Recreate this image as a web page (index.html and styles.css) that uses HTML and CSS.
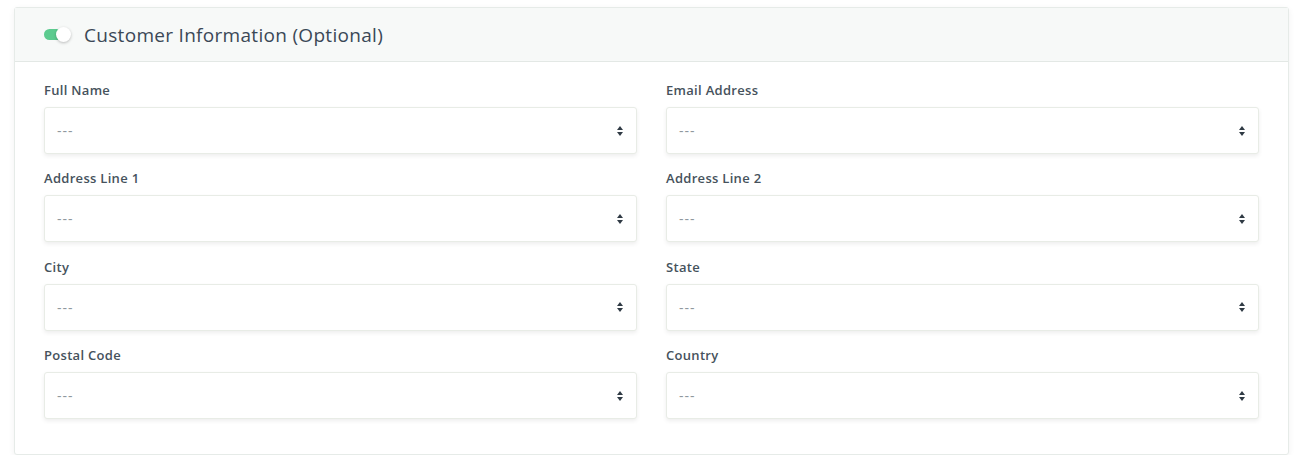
FILE: index.html
```html
<!DOCTYPE html>
<html lang="en">
<head>
    <meta charset="UTF-8">
    <title>Customer Information</title>
    <link rel="stylesheet" href="styles.css">
</head>
<body>
<div class="card">
    <div class="card-header">
        <span class="toggle"><span class="knob"></span></span>
        <h2 class="card-title">Customer Information (Optional)</h2>
    </div>
    <div class="card-body">
        <div class="field">
            <label>Full Name</label>
            <div class="select"><span>---</span><span class="arrows"></span></div>
        </div>
        <div class="field">
            <label>Email Address</label>
            <div class="select"><span>---</span><span class="arrows"></span></div>
        </div>
        <div class="field">
            <label>Address Line 1</label>
            <div class="select"><span>---</span><span class="arrows"></span></div>
        </div>
        <div class="field">
            <label>Address Line 2</label>
            <div class="select"><span>---</span><span class="arrows"></span></div>
        </div>
        <div class="field">
            <label>City</label>
            <div class="select"><span>---</span><span class="arrows"></span></div>
        </div>
        <div class="field">
            <label>State</label>
            <div class="select"><span>---</span><span class="arrows"></span></div>
        </div>
        <div class="field">
            <label>Postal Code</label>
            <div class="select"><span>---</span><span class="arrows"></span></div>
        </div>
        <div class="field">
            <label>Country</label>
            <div class="select"><span>---</span><span class="arrows"></span></div>
        </div>
    </div>
</div>
</body>
</html>
```

FILE: styles.css
```css
body {
    font-family: "Open Sans", "Liberation Sans", sans-serif;
    margin: 0;
    padding: 7px 11px 0 14px;
    background-color: #fff;
    color: #3d4a55;
}

.card {
    border: 1px solid #e6ebe8;
    border-radius: 3px;
    background-color: #fff;
    box-shadow: 0 2px 6px rgba(0, 0, 0, 0.06);
}

.card-header {
    display: flex;
    align-items: center;
    height: 53px;
    padding: 0 29px;
    background-color: #f7f9f8;
    border-bottom: 1px solid #e3e8e5;
}

.toggle {
    position: relative;
    width: 20px;
    height: 11px;
    border-radius: 6px;
    background-color: #5ccb8f;
    margin-right: 20px;
}

.knob {
    position: absolute;
    top: -2px;
    left: 12px;
    width: 15px;
    height: 15px;
    border-radius: 50%;
    background-color: #fff;
    box-shadow: 0 1px 3px rgba(0, 0, 0, 0.25);
}

.card-title {
    margin: 0;
    font-size: 19px;
    font-weight: 400;
    color: #3b4856;
    letter-spacing: 0.3px;
}

.card-body {
    display: grid;
    grid-template-columns: 1fr 1fr;
    column-gap: 29px;
    row-gap: 15.4px;
    padding: 19px 29px 35px;
}

.field label {
    display: block;
    font-size: 13px;
    font-weight: 600;
    color: #46525c;
    letter-spacing: 0.3px;
    margin-bottom: 8px;
}

.select {
    display: flex;
    align-items: center;
    justify-content: space-between;
    height: 45px;
    padding: 0 12px;
    border: 1px solid #e8ece6;
    border-radius: 3px;
    background-color: #fff;
    box-shadow: 0 2px 4px rgba(0, 0, 0, 0.07);
    font-size: 14px;
    letter-spacing: 1px;
    color: #8f989e;
}

.arrows {
    position: relative;
    width: 7px;
    height: 10px;
    margin-right: 0;
}

.arrows::before,
.arrows::after {
    content: "";
    position: absolute;
    left: 0;
    border-left: 3.5px solid transparent;
    border-right: 3.5px solid transparent;
}

.arrows::before {
    top: 0;
    border-bottom: 4px solid #2f3a44;
}

.arrows::after {
    bottom: 0;
    border-top: 4px solid #2f3a44;
}
```
